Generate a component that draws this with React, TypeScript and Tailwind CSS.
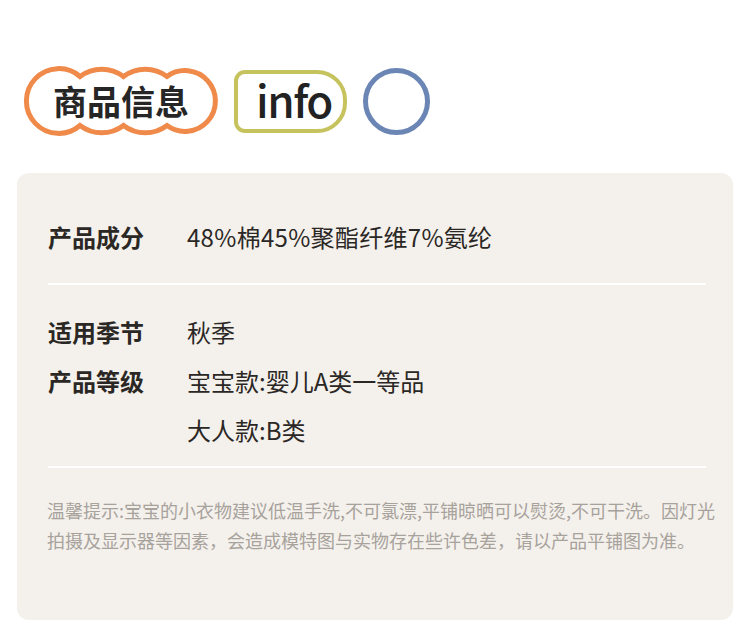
const CJK = "font-['Noto_Sans_CJK_SC','Noto_Sans',sans-serif]";

const rows = [
  { label: "适用季节", values: ["秋季"] },
  { label: "产品等级", values: ["宝宝款:婴儿A类一等品", "大人款:B类"] },
];

function CloudTag({ text }: { text: string }) {
  return (
    <div className="relative w-[200px] h-[74px] flex items-center justify-center">
      <svg className="absolute inset-0" width="200" height="74" viewBox="0 0 200 74" fill="none">
        <path
          d="M59 12.5 A36 36 0 0 1 102.5 12.5 A36 36 0 0 1 146 12.5 A30.4 30.4 0 1 1 146 61.5 A36 36 0 0 1 102.5 61.5 A36 36 0 0 1 59 61.5 A32.4 32.4 0 1 1 59 12.5 Z"
          stroke="#ef8a4b"
          strokeWidth="5"
          fill="#ffffff"
        />
      </svg>
      <span className={`relative text-[34px] leading-none font-bold text-[#262626] ${CJK}`}>{text}</span>
    </div>
  );
}

export default function App() {
  return (
    <div className={`w-[750px] h-[621px] bg-white overflow-hidden ${CJK}`}>
      {/* header tags */}
      <div className="flex items-center pt-[64px] pl-[21px]">
        <CloudTag text="商品信息" />
        <div className="ml-[13px] w-[113px] h-[63px] border-[4.5px] border-[#c6c35e] rounded-l-[11px] rounded-r-[30px] flex items-center pl-[18px]">
          <span className="text-[44px] leading-none tracking-[-1.5px] font-medium text-[#222] -mt-[4px]">info</span>
        </div>
        <div className="ml-[16px] w-[67px] h-[67px] rounded-full border-[5px] border-[#6b86b5]" />
      </div>

      {/* card */}
      <div className="mt-[35px] ml-[17px] w-[716px] h-[447px] rounded-[12px] bg-[#f4f1ec] pt-[48px] pl-[31px] pr-[27px]">
        <div className="flex text-[24px] leading-8 text-[#2b2725]">
          <div className="w-[139px] font-bold">产品成分</div>
          <div className="tracking-[0.3px]">48%棉45%聚酯纤维7%氨纶</div>
        </div>
        <div className="mt-[30px] h-[2px] bg-white" />

        <div className="mt-[31px] flex flex-col gap-[17px] text-[24px] leading-8 text-[#2b2725]">
          {rows.map((row) => (
            <div key={row.label} className="flex">
              <div className="w-[139px] shrink-0 font-bold">{row.label}</div>
              <div className="flex flex-col gap-[17px]">
                {row.values.map((v) => (
                  <div key={v}>{v}</div>
                ))}
              </div>
            </div>
          ))}
        </div>
        <div className="mt-[20px] h-[2px] bg-white" />

        <div className="mt-[27px] -ml-px text-[18px] leading-[30px] text-[#a8a29c] whitespace-nowrap">
          <div>温馨提示:宝宝的小衣物建议低温手洗,不可氯漂,平铺晾晒可以熨烫,不可干洗。因灯光</div>
          <div>拍摄及显示器等因素，会造成模特图与实物存在些许色差，请以产品平铺图为准。</div>
        </div>
      </div>
    </div>
  );
}
